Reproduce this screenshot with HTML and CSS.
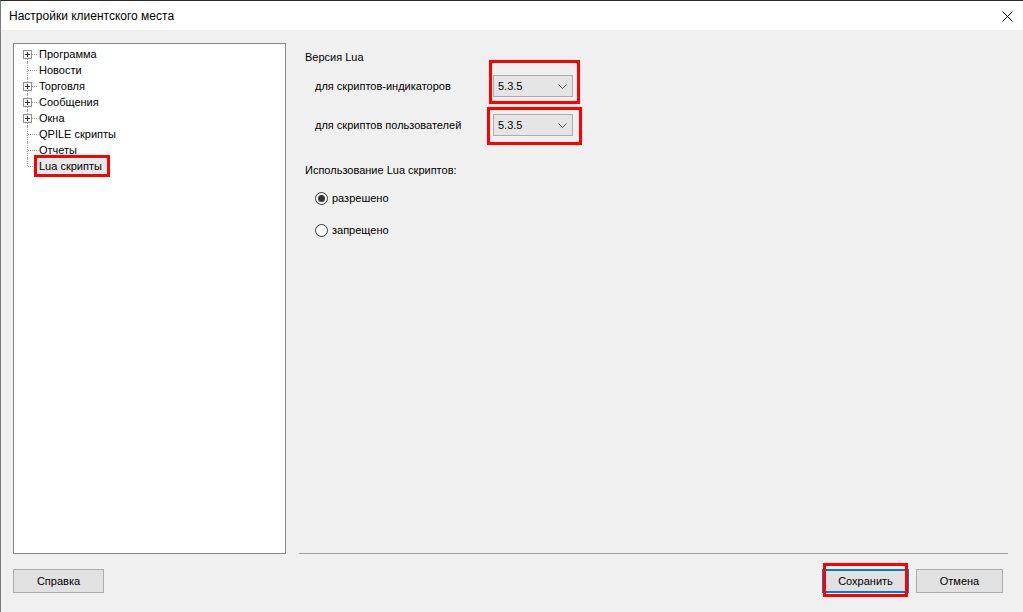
FILE: index.html
```html
<!DOCTYPE html>
<html lang="ru">

<head>
  <meta charset="UTF-8">
  <title>Настройки клиентского места</title>
  <link rel="stylesheet" href="styles.css">
</head>

<body>
  <div class="window">
    <div class="titlebar">
      <span class="caption">Настройки клиентского места</span>
      <svg class="close" width="11" height="11" viewBox="0 0 11 11">
        <path d="M0.5 0.5 L10.5 10.5 M10.5 0.5 L0.5 10.5" stroke="#000" stroke-width="1" fill="none"/>
      </svg>
    </div>

    <div class="content">
      <div class="tree">
        <div class="node first">
          <span class="branch plus"><i></i></span><span class="label">Программа</span>
        </div>
        <div class="node">
          <span class="branch"></span><span class="label">Новости</span>
        </div>
        <div class="node">
          <span class="branch plus"><i></i></span><span class="label">Торговля</span>
        </div>
        <div class="node">
          <span class="branch plus"><i></i></span><span class="label">Сообщения</span>
        </div>
        <div class="node">
          <span class="branch plus"><i></i></span><span class="label">Окна</span>
        </div>
        <div class="node">
          <span class="branch"></span><span class="label">QPILE скрипты</span>
        </div>
        <div class="node">
          <span class="branch"></span><span class="label">Отчеты</span>
        </div>
        <div class="node last">
          <span class="branch"></span><span class="label selected">Lua скрипты</span>
        </div>
      </div>

      <div class="settings">
        <div class="group-title">Версия Lua</div>
        <div class="field">
          <span class="field-label">для скриптов-индикаторов</span>
          <div class="combo">
            <span>5.3.5</span>
            <svg width="9" height="5" viewBox="0 0 9 5"><path d="M0.5 0.5 L4.5 4.5 L8.5 0.5" stroke="#555" fill="none"/></svg>
          </div>
        </div>
        <div class="field">
          <span class="field-label">для скриптов пользователей</span>
          <div class="combo">
            <span>5.3.5</span>
            <svg width="9" height="5" viewBox="0 0 9 5"><path d="M0.5 0.5 L4.5 4.5 L8.5 0.5" stroke="#555" fill="none"/></svg>
          </div>
        </div>

        <div class="group-title second">Использование Lua скриптов:</div>
        <div class="radio">
          <svg width="13" height="13" viewBox="0 0 13 13">
            <circle cx="6.5" cy="6.5" r="6" fill="#fff" stroke="#333"/>
            <circle cx="6.5" cy="6.5" r="3.5" fill="#333"/>
          </svg>
          <span>разрешено</span>
        </div>
        <div class="radio">
          <svg width="13" height="13" viewBox="0 0 13 13">
            <circle cx="6.5" cy="6.5" r="6" fill="#fff" stroke="#333"/>
          </svg>
          <span>запрещено</span>
        </div>
      </div>
    </div>

    <div class="footer">
      <button class="btn help">Справка</button>
      <div class="actions">
        <button class="btn default">Сохранить</button>
        <button class="btn">Отмена</button>
      </div>
    </div>

    <!-- красные рамки выделения -->
    <div class="mark mark-tree"></div>
    <div class="mark mark-combo1"></div>
    <div class="mark mark-combo2"></div>
    <div class="mark mark-save"></div>
  </div>
</body>

</html>
```

FILE: styles.css
```css
* {
  box-sizing: border-box;
}

body {
  margin: 0;
  background-color: #f0f0f0;
  font-family: "Liberation Sans", Arial, sans-serif;
  font-size: 11px;
  color: #000;
}

.window {
  position: relative;
  width: 1023px;
  height: 612px;
  border-top: 1px solid #2b2b2b;
  border-left: 1px solid #7a7a7a;
  display: flex;
  flex-direction: column;
  overflow: hidden;
}

.titlebar {
  height: 29px;
  background-color: #fff;
  display: flex;
  align-items: center;
  justify-content: space-between;
  padding: 0 10px 0 8px;
}

.caption {
  font-size: 12px;
  padding-top: 1px;
}

.close {
  margin-top: 1px;
}

.content {
  display: flex;
  padding: 13px 15px 0 12px;
}

.tree {
  width: 273px;
  height: 511px;
  background-color: #fff;
  border: 1px solid #828790;
  padding-top: 2px;
}

.node {
  height: 16px;
  display: flex;
  align-items: center;
}

.branch {
  position: relative;
  width: 24px;
  height: 16px;
  flex-shrink: 0;
}

/* линии дерева */
.branch::before {
  content: '';
  position: absolute;
  left: 13px;
  top: 0;
  height: 16px;
  border-left: 1px dotted #a0a0a0;
}

.first .branch::before {
  top: 8px;
  height: 8px;
}

.last .branch::before {
  height: 8px;
}

.branch::after {
  content: '';
  position: absolute;
  left: 14px;
  top: 8px;
  width: 9px;
  border-top: 1px dotted #a0a0a0;
}

.plus i {
  position: absolute;
  z-index: 1;
  left: 9px;
  top: 4px;
  width: 9px;
  height: 9px;
  background: #fff linear-gradient(#333, #333) center / 5px 1px no-repeat;
  border: 1px solid #919191;
}

.plus i::after {
  content: '';
  position: absolute;
  left: 3px;
  top: 1px;
  width: 1px;
  height: 5px;
  background-color: #333;
}

.label {
  padding: 1px 2px 1px 1px;
  white-space: nowrap;
}

.label.selected {
  background-color: #e8e8e8;
  padding-right: 4px;
}

.settings {
  flex: 1;
  margin-left: 13px;
  border-bottom: 1px solid #a0a0a0;
  padding: 7px 0 0 6px;
}

.group-title {
  line-height: 14px;
}

.group-title.second {
  margin-top: 27px;
}

.field {
  display: flex;
  align-items: center;
  margin-top: 11px;
  padding-left: 10px;
}

.field + .field {
  margin-top: 17px;
}

.field-label {
  width: 178px;
}

.combo {
  width: 80px;
  height: 22px;
  background-color: #e5e5e5;
  border: 1px solid #adadad;
  display: flex;
  align-items: center;
  justify-content: space-between;
  padding: 0 5px 0 4px;
  font-size: 11px;
}

.radio {
  display: flex;
  align-items: center;
  gap: 4px;
  margin-top: 12px;
  padding-left: 10px;
  height: 18px;
}

.radio + .radio {
  margin-top: 14px;
}

.footer {
  display: flex;
  justify-content: space-between;
  padding: 15px 20px 0 12px;
}

.actions {
  display: flex;
  gap: 7px;
}

.btn {
  width: 87px;
  height: 24px;
  font-family: inherit;
  font-size: 11px;
  color: #000;
  background-color: #e1e1e1;
  border: 1px solid #adadad;
  padding: 0;
}

.btn.help {
  width: 91px;
}

.btn.default {
  border: 2px solid #0078d7;
}

.mark {
  position: absolute;
  border: 3px solid #f00;
}

.mark-tree {
  left: 33px;
  top: 154px;
  width: 76px;
  height: 22px;
}

.mark-combo1 {
  left: 488px;
  top: 59px;
  width: 91px;
  height: 44px;
}

.mark-combo2 {
  left: 486px;
  top: 106px;
  width: 95px;
  height: 38px;
}

.mark-save {
  left: 822px;
  top: 562px;
  width: 85px;
  height: 34px;
}
```
